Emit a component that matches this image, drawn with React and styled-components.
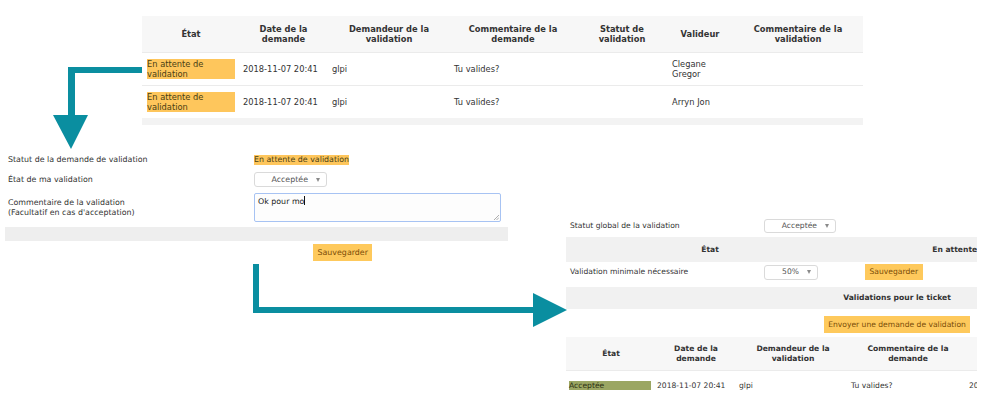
import React from "react";
import styled, { createGlobalStyle } from "styled-components";

const GlobalStyle = createGlobalStyle`
  html, body { margin: 0; padding: 0; background: #fff; }
  body { font-family: "DejaVu Sans", Verdana, sans-serif; color: #333; }
  * { box-sizing: border-box; }
`;

const Canvas = styled.div`
  position: relative;
  width: 992px;
  height: 408px;
  overflow: hidden;
  background: #fff;
`;

/* each screenshot sits on the free canvas like a window on a desktop */
const Shot = styled.section`
  position: absolute;
  left: ${(p) => p.$x}px;
  top: ${(p) => p.$y}px;
  width: ${(p) => p.$w}px;
  height: ${(p) => p.$h}px;
  overflow: hidden;
  font-size: ${(p) => p.$fs}px;
  line-height: ${(p) => p.$lh}px;
  background: #fff;
  display: flex;
  flex-direction: column;
  padding-top: ${(p) => p.$pt || 0}px;
`;

const Sheet = styled.div`
  width: ${(p) => p.$w}px;
  display: flex;
  flex-direction: column;
`;

const TRow = styled.div`
  display: grid;
  grid-template-columns: ${(p) => p.$cols};
  height: ${(p) => p.$h}px;
  flex: none;
  align-items: center;
  background: ${(p) => p.$bg || "transparent"};
  border-bottom: ${(p) => (p.$line ? "1px solid #ebebeb" : "0")};
`;

const Th = styled.div`
  font-weight: bold;
  text-align: center;
  color: #333;
  padding: ${(p) => p.$pad};
`;

const Td = styled.div`
  padding: ${(p) => p.$pad};
  color: #333;
  white-space: ${(p) => (p.$nowrap ? "nowrap" : "normal")};
`;

const Strip = styled.div`
  height: 7px;
  flex: none;
  background: #f3f3f3;
`;

const Badge = styled.span`
  display: ${(p) => (p.$block ? "block" : "inline-block")};
  width: ${(p) => (p.$w ? `${p.$w}px` : "auto")};
  background: ${(p) => (p.$tone === "ok" ? "#9ba663" : "#fec65c")};
  color: ${(p) => (p.$tone === "ok" ? "#2e3214" : "#4a3f14")};
`;

const FormRow = styled.div`
  display: grid;
  grid-template-columns: ${(p) => p.$cols};
  align-items: center;
  flex: none;
  height: ${(p) => (p.$h ? `${p.$h}px` : "auto")};
  margin-top: ${(p) => p.$mt || 0}px;
  padding-bottom: ${(p) => p.$pb || 0}px;
`;

const Label = styled.div`
  padding-left: ${(p) => p.$pl}px;
  color: #333;
`;

const Select = styled.div`
  display: flex;
  align-items: center;
  justify-content: flex-end;
  gap: 8px;
  width: ${(p) => p.$w}px;
  height: ${(p) => p.$h}px;
  padding-right: 6px;
  border: 1px solid #dadada;
  border-radius: 3px;
  background: #fff;
  color: #555;
  &::after {
    content: "";
    width: 0;
    height: 0;
    border-left: 2.5px solid transparent;
    border-right: 2.5px solid transparent;
    border-top: 4px solid #8a8a8a;
  }
`;

const Button = styled.button`
  font: inherit;
  line-height: inherit;
  border: 0;
  margin: 0;
  background: #fec95c;
  color: #7a4c08;
  height: ${(p) => p.$h}px;
  padding: 0 4.5px;
  cursor: pointer;
  justify-self: start;
`;

const TextBox = styled.div`
  position: relative;
  width: 247px;
  height: 29px;
  border: 1px solid #a7c3f3;
  border-radius: 2px;
  background: #fdfdfd;
  padding: 2px 3px;
  color: #222;
`;

const Caret = styled.span`
  display: inline-block;
  width: 1px;
  height: 9px;
  background: #111;
  vertical-align: -1px;
`;

const Grip = styled.svg`
  position: absolute;
  right: 1px;
  bottom: 1px;
`;

const Band = styled.div`
  flex: none;
  height: ${(p) => p.$h}px;
  margin-top: ${(p) => p.$mt || 0}px;
  background: ${(p) => p.$bg};
  display: grid;
  grid-template-columns: ${(p) => p.$cols || "1fr"};
  align-items: center;
  font-weight: bold;
  text-align: center;
  color: #333;
  white-space: nowrap;
`;

const Footer = styled.div`
  flex: none;
  display: flex;
  justify-content: ${(p) => p.$justify || "flex-start"};
  padding-left: ${(p) => p.$pl || 0}px;
  padding-top: ${(p) => p.$pt || 0}px;
  margin-top: ${(p) => p.$mt || 0}px;
  height: ${(p) => (p.$h ? `${p.$h}px` : "auto")};
`;

const Arrows = styled.svg`
  position: absolute;
  left: 0;
  top: 0;
  pointer-events: none;
`;

const COLS1 = "96px 89px 122px 126px 92px 64px 132px";
const PAD1 = "0 3px 0 5px";
const COLS3 = "88px 82px 112px 118px 72px";
const PAD3 = "0 1px 0 3px";

function RequestTable() {
  return (
    <Shot $x={142} $y={16} $w={721} $h={109} $fs={8.3} $lh={10}>
      <TRow $cols={COLS1} $h={37} $bg="#f7f7f7" $line>
        <Th $pad={PAD1}>État</Th>
        <Th $pad={PAD1}>Date de la<br />demande</Th>
        <Th $pad={PAD1}>Demandeur de la<br />validation</Th>
        <Th $pad={PAD1}>Commentaire de la<br />demande</Th>
        <Th $pad={PAD1}>Statut de<br />validation</Th>
        <Th $pad={PAD1}>Valideur</Th>
        <Th $pad={PAD1}>Commentaire de la<br />validation</Th>
      </TRow>
      <TRow $cols={COLS1} $h={33} $line>
        <Td $pad={PAD1}><Badge $block>En attente de<br />validation</Badge></Td>
        <Td $pad={PAD1}>2018-11-07 20:41</Td>
        <Td $pad={PAD1}>glpi</Td>
        <Td $pad={PAD1}>Tu valides?</Td>
        <Td $pad={PAD1}></Td>
        <Td $pad={PAD1}>Clegane<br />Gregor</Td>
        <Td $pad={PAD1}></Td>
      </TRow>
      <TRow $cols={COLS1} $h={32}>
        <Td $pad={PAD1}><Badge $block>En attente de<br />validation</Badge></Td>
        <Td $pad={PAD1}>2018-11-07 20:41</Td>
        <Td $pad={PAD1}>glpi</Td>
        <Td $pad={PAD1}>Tu valides?</Td>
        <Td $pad={PAD1}></Td>
        <Td $pad={PAD1}>Arryn Jon</Td>
        <Td $pad={PAD1}></Td>
      </TRow>
      <Strip />
    </Shot>
  );
}

function ValidationForm() {
  return (
    <Shot $x={5} $y={150} $w={503} $h={118} $fs={7.9} $lh={10} $pt={5}>
      <FormRow $cols="249px 1fr" $h={10}>
        <Label $pl={3}>Statut de la demande de validation</Label>
        <div><Badge>En attente de validation</Badge></div>
      </FormRow>
      <FormRow $cols="249px 1fr" $mt={7}>
        <Label $pl={3}>État de ma validation</Label>
        <Select $w={73} $h={15}>Acceptée</Select>
      </FormRow>
      <FormRow $cols="249px 1fr" $mt={6}>
        <Label $pl={3}>Commentaire de la validation<br />(Facultatif en cas d'acceptation)</Label>
        <TextBox>
          Ok pour mo<Caret />
          <Grip width="6" height="6" viewBox="0 0 6 6">
            <path d="M1 6 L6 1 M3.5 6 L6 3.5" stroke="#999" strokeWidth="0.8" fill="none" />
          </Grip>
        </TextBox>
      </FormRow>
      <Band $h={14} $mt={5} $bg="#eeeeee" />
      <Footer $pl={308} $mt={3}>
        <Button $h={17}>Sauvegarder</Button>
      </Footer>
    </Shot>
  );
}

function TicketValidations() {
  return (
    <Shot $x={566} $y={215} $w={411} $h={193} $fs={7.6} $lh={9.5}>
      <Sheet $w={662}>
        <FormRow $cols="198px auto" $h={22}>
          <Label $pl={4}>Statut global de la validation</Label>
          <Select $w={72} $h={14}>Acceptée</Select>
        </FormRow>
        <Band $h={25} $bg="#f1f1f1" $cols="288px 260px">
          <span>État</span>
          <span>En attente de validation</span>
        </Band>
        <FormRow $cols="198px 101px auto" $h={25} $pb={5}>
          <Label $pl={4}>Validation minimale nécessaire</Label>
          <Select $w={54} $h={15}>50%</Select>
          <Button $h={16}>Sauvegarder</Button>
        </FormRow>
        <Band $h={22} $bg="#f1f1f1">
          <span>Validations pour le ticket</span>
        </Band>
        <Footer $justify="center" $pt={7} $h={28}>
          <Button $h={17}>Envoyer une demande de validation</Button>
        </Footer>
        <TRow $cols={COLS3} $h={34} $bg="#f7f7f7" $line>
          <Th $pad={PAD3}>État</Th>
          <Th $pad={PAD3}>Date de la<br />demande</Th>
          <Th $pad={PAD3}>Demandeur de la<br />validation</Th>
          <Th $pad={PAD3}>Commentaire de la<br />demande</Th>
          <Th $pad={PAD3}></Th>
        </TRow>
        <TRow $cols={COLS3} $h={29}>
          <Td $pad={PAD3}><Badge $block $w={82} $tone="ok">Acceptée</Badge></Td>
          <Td $pad={PAD3}>2018-11-07 20:41</Td>
          <Td $pad={PAD3}>glpi</Td>
          <Td $pad={PAD3}>Tu valides?</Td>
          <Td $pad={PAD3} $nowrap>2018-11-07 20:42</Td>
        </TRow>
      </Sheet>
    </Shot>
  );
}

export default function App() {
  return (
    <>
      <GlobalStyle />
      <Canvas>
        <RequestTable />
        <ValidationForm />
        <TicketValidations />
        <Arrows width="992" height="408" viewBox="0 0 992 408">
          <path
            d="M142 67 L68 67 L68 115 L53 115 L71 149 L88 115 L75 115 L75 73 L142 73 Z"
            fill="#0a8ea0"
          />
          <path
            d="M253 264 L253 313 L533 313 L533 327 L567 310 L533 293 L533 307 L259 307 L259 264 Z"
            fill="#0a8ea0"
          />
        </Arrows>
      </Canvas>
    </>
  );
}
